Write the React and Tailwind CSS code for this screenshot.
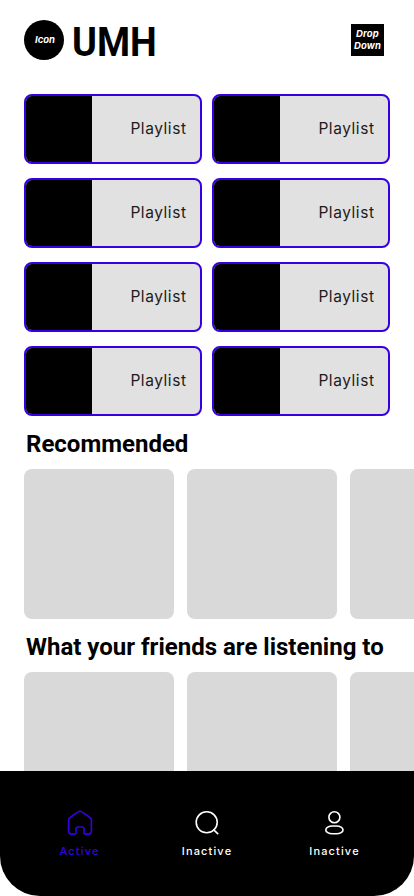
const playlists = Array.from({ length: 8 }, (_, i) => i);

function Heading({ children }) {
  return (
    <h2 className="mb-[10px] ml-[2px] mt-[13px] h-[30px] whitespace-nowrap font-['Roboto','Liberation_Sans',sans-serif] text-2xl font-bold leading-[30px] text-black">
      {children}
    </h2>
  );
}

function CoverRow() {
  return (
    <div className="flex gap-[13px]">
      {[0, 1, 2].map((i) => (
        <div key={i} className="size-[150px] shrink-0 rounded-lg bg-[#d9d9d9]" />
      ))}
    </div>
  );
}

function HomeIcon() {
  return (
    <svg className="size-7" viewBox="0 0 28 28" fill="none" stroke="currentColor" strokeWidth="1.6" strokeLinejoin="round">
      <path d="M2.6 11.4c0-1.3.5-2.2 1.5-2.9l7.500-5.400c1.500-1.100 3.300-1.100 4.800 0l7.500 5.400c1 .7 1.500 1.600 1.500 2.900v10.600c0 1.900-1.200 3.100-3.100 3.100h-2.600c-1.100 0-1.700-.6-1.700-1.700v-3.600c0-1.100-.7-1.800-1.800-1.800h-4.400c-1.100 0-1.800.7-1.800 1.800v3.600c0 1.100-.6 1.700-1.700 1.700H5.700c-1.900 0-3.100-1.200-3.100-3.100V11.400Z" />
    </svg>
  );
}

function SearchIcon() {
  return (
    <svg className="size-7" viewBox="0 0 28 28" fill="none" stroke="currentColor" strokeWidth="1.6">
      <circle cx="13.7" cy="13.3" r="10.5" />
      <path d="m20.2 20.400 5 4.700" />
    </svg>
  );
}

function UserIcon() {
  return (
    <svg className="size-7" viewBox="0 0 28 28" fill="none" stroke="currentColor" strokeWidth="1.6">
      <circle cx="13.4" cy="8.3" r="5.5" />
      <rect x="4.8" y="17" width="17.2" height="7.8" rx="6.500" ry="3.900" />
    </svg>
  );
}

function NavItem({ icon, label, className }) {
  return (
    <div className={`flex w-[127.5px] flex-col items-center ${className}`}>
      {icon}
      <span className="mt-[6px] font-['Inter','Liberation_Sans',sans-serif] text-[11px] font-medium leading-4 tracking-[1.15px]">{label}</span>
    </div>
  );
}

export default function App() {
  return (
    <div className="flex h-[896px] w-[414px] flex-col overflow-hidden bg-white">
      <header className="flex h-[94px] shrink-0 items-start pl-6 pr-[30px] pt-5">
        <div className="flex size-10 items-center justify-center rounded-full bg-black pl-[2px] font-['Inter','Liberation_Sans',sans-serif] text-[9.5px] font-bold italic text-white">
          Icon
        </div>
        <h1 className="ml-[8px] mt-[3px] origin-left scale-x-[0.945] font-['Roboto','Liberation_Sans',sans-serif] text-[40px] font-bold leading-10 text-black">UMH</h1>
        <div className="ml-auto mt-1 h-8 w-[33px] whitespace-pre-line bg-black pt-1 text-center font-['Inter','Liberation_Sans',sans-serif] text-[9.5px] font-bold italic leading-3 tracking-[0.15px] text-white">
          {'Drop\nDown'}
        </div>
      </header>

      <main className="flex h-[677px] shrink-0 flex-col overflow-hidden pl-6">
        <div className="grid grid-cols-[178px_178px] gap-x-[10px] gap-y-[14px]">
          {playlists.map((i) => (
            <div key={i} className="flex h-[70px] items-center overflow-hidden rounded-lg border-2 border-[#3700e0] bg-[#e1e1e1]">
              <div className="h-full w-[66px] bg-black" />
              <span className="ml-auto mr-[13.5px] font-['Inter','Noto_Sans',sans-serif] text-[15.5px] leading-6 tracking-[0.55px] text-[#1d1b20]">Playlist</span>
            </div>
          ))}
        </div>
        <Heading>Recommended</Heading>
        <CoverRow />
        <Heading>What your friends are listening to</Heading>
        <CoverRow />
      </main>

      <nav className="flex h-[125px] shrink-0 justify-center rounded-b-[40px] bg-black pt-[38px]">
        <NavItem icon={<HomeIcon />} label="Active" className="text-[#3700e0]" />
        <NavItem icon={<SearchIcon />} label="Inactive" className="text-white" />
        <NavItem icon={<UserIcon />} label="Inactive" className="text-white" />
      </nav>
    </div>
  );
}
